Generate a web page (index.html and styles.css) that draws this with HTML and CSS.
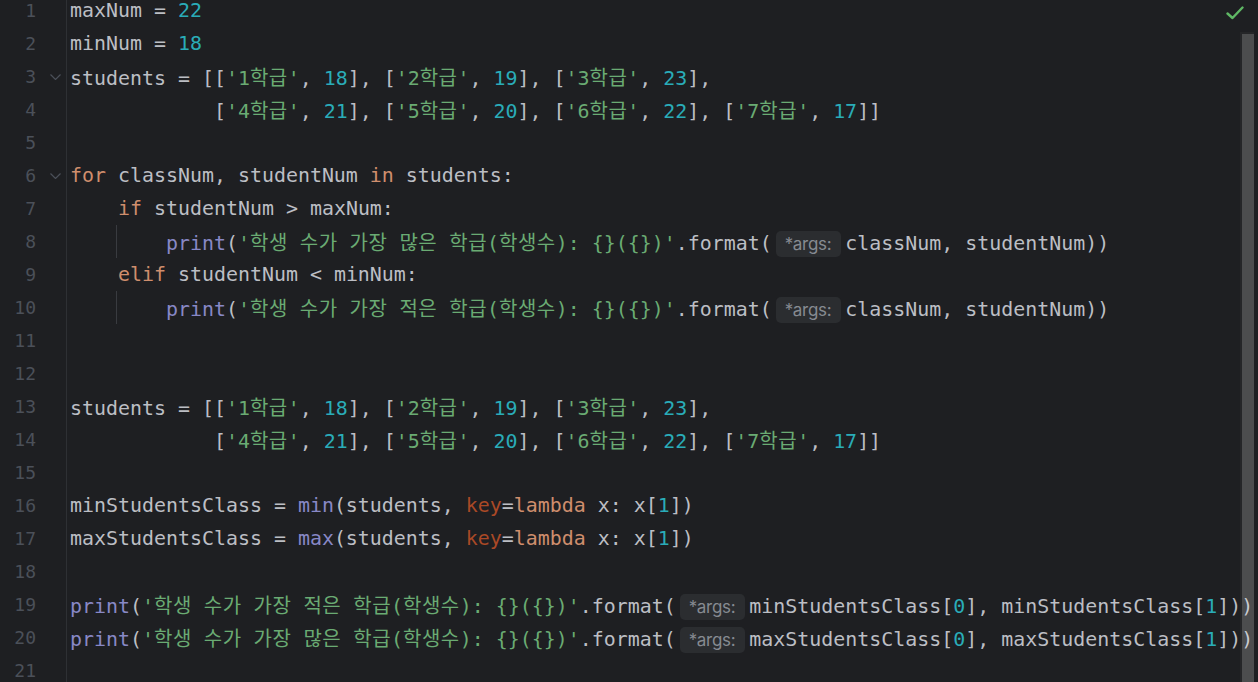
FILE: index.html
```html
<!DOCTYPE html>
<html lang="ko">
<head>
<meta charset="utf-8">
<title>editor</title>
<link rel="stylesheet" href="styles.css">
</head>
<body>
<div class="editor">
  <div class="lines">
    <div class="line"><span class="ln">1</span><span class="fold"></span><span class="code">maxNum = <span class="n">22</span></span></div>
    <div class="line"><span class="ln">2</span><span class="fold"></span><span class="code">minNum = <span class="n">18</span></span></div>
    <div class="line"><span class="ln">3</span><span class="fold"><svg class="chev" width="11" height="6" viewBox="0 0 11 6"><path d="M0.5 0.5 L5.5 5.5 L10.5 0.5"/></svg></span><span class="code">students = [[<span class="s">'1<span class="ko">학급</span>'</span>, <span class="n">18</span>], [<span class="s">'2<span class="ko">학급</span>'</span>, <span class="n">19</span>], [<span class="s">'3<span class="ko">학급</span>'</span>, <span class="n">23</span>],</span></div>
    <div class="line"><span class="ln">4</span><span class="fold"></span><span class="code">            [<span class="s">'4<span class="ko">학급</span>'</span>, <span class="n">21</span>], [<span class="s">'5<span class="ko">학급</span>'</span>, <span class="n">20</span>], [<span class="s">'6<span class="ko">학급</span>'</span>, <span class="n">22</span>], [<span class="s">'7<span class="ko">학급</span>'</span>, <span class="n">17</span>]]</span></div>
    <div class="line"><span class="ln">5</span><span class="fold"></span><span class="code"></span></div>
    <div class="line"><span class="ln">6</span><span class="fold"><svg class="chev" width="11" height="6" viewBox="0 0 11 6"><path d="M0.5 0.5 L5.5 5.5 L10.5 0.5"/></svg></span><span class="code"><span class="kw">for</span> classNum, studentNum <span class="kw">in</span> students:</span></div>
    <div class="line"><span class="ln">7</span><span class="fold"></span><span class="code">    <span class="kw">if</span> studentNum &gt; maxNum:</span></div>
    <div class="line"><span class="ln">8</span><span class="fold"></span><span class="code"><span class="indent"></span><span class="b">print</span>(<span class="s">'<span class="ko">학생</span> <span class="ko">수가</span> <span class="ko">가장</span> <span class="ko">많은</span> <span class="ko">학급</span>(<span class="ko">학생수</span>): {}({})'</span>.format(<span class="hint">*args:</span>classNum, studentNum))</span></div>
    <div class="line"><span class="ln">9</span><span class="fold"></span><span class="code">    <span class="kw">elif</span> studentNum &lt; minNum:</span></div>
    <div class="line"><span class="ln">10</span><span class="fold"></span><span class="code"><span class="indent"></span><span class="b">print</span>(<span class="s">'<span class="ko">학생</span> <span class="ko">수가</span> <span class="ko">가장</span> <span class="ko">적은</span> <span class="ko">학급</span>(<span class="ko">학생수</span>): {}({})'</span>.format(<span class="hint">*args:</span>classNum, studentNum))</span></div>
    <div class="line"><span class="ln">11</span><span class="fold"></span><span class="code"></span></div>
    <div class="line"><span class="ln">12</span><span class="fold"></span><span class="code"></span></div>
    <div class="line"><span class="ln">13</span><span class="fold"></span><span class="code">students = [[<span class="s">'1<span class="ko">학급</span>'</span>, <span class="n">18</span>], [<span class="s">'2<span class="ko">학급</span>'</span>, <span class="n">19</span>], [<span class="s">'3<span class="ko">학급</span>'</span>, <span class="n">23</span>],</span></div>
    <div class="line"><span class="ln">14</span><span class="fold"></span><span class="code">            [<span class="s">'4<span class="ko">학급</span>'</span>, <span class="n">21</span>], [<span class="s">'5<span class="ko">학급</span>'</span>, <span class="n">20</span>], [<span class="s">'6<span class="ko">학급</span>'</span>, <span class="n">22</span>], [<span class="s">'7<span class="ko">학급</span>'</span>, <span class="n">17</span>]]</span></div>
    <div class="line"><span class="ln">15</span><span class="fold"></span><span class="code"></span></div>
    <div class="line"><span class="ln">16</span><span class="fold"></span><span class="code">minStudentsClass = <span class="b">min</span>(students, <span class="p">key</span>=<span class="kw">lambda</span> x: x[<span class="n">1</span>])</span></div>
    <div class="line"><span class="ln">17</span><span class="fold"></span><span class="code">maxStudentsClass = <span class="b">max</span>(students, <span class="p">key</span>=<span class="kw">lambda</span> x: x[<span class="n">1</span>])</span></div>
    <div class="line"><span class="ln">18</span><span class="fold"></span><span class="code"></span></div>
    <div class="line"><span class="ln">19</span><span class="fold"></span><span class="code"><span class="b">print</span>(<span class="s">'<span class="ko">학생</span> <span class="ko">수가</span> <span class="ko">가장</span> <span class="ko">적은</span> <span class="ko">학급</span>(<span class="ko">학생수</span>): {}({})'</span>.format(<span class="hint">*args:</span>minStudentsClass[<span class="n">0</span>], minStudentsClass[<span class="n">1</span>]))</span></div>
    <div class="line"><span class="ln">20</span><span class="fold"></span><span class="code"><span class="b">print</span>(<span class="s">'<span class="ko">학생</span> <span class="ko">수가</span> <span class="ko">가장</span> <span class="ko">많은</span> <span class="ko">학급</span>(<span class="ko">학생수</span>): {}({})'</span>.format(<span class="hint">*args:</span>maxStudentsClass[<span class="n">0</span>], maxStudentsClass[<span class="n">1</span>]))</span></div>
    <div class="line"><span class="ln">21</span><span class="fold"></span><span class="code"></span></div>
  </div>
  <svg class="check" width="18" height="14" viewBox="0 0 18 14"><path d="M1.5 7.5 L6.5 12 L16.5 1.5"/></svg>
  <div class="scrollbar"><div class="thumb"></div></div>
</div>
</body>
</html>
```

FILE: styles.css
```css
html, body {
  margin: 0;
  padding: 0;
  background: #1e1f22;
  overflow: hidden;
  height: 682px;
}

.editor {
  position: relative;
  width: 1258px;
  height: 682px;
  overflow: hidden;
  background: #1e1f22;
}

.lines {
  margin-top: -6px;
  display: flex;
  flex-direction: column;
}

.line {
  display: flex;
  height: 33px;
  line-height: 33px;
  font-family: "DejaVu Sans Mono", "Noto Sans CJK KR", monospace;
  font-size: 19.93px;
  color: #bcbec4;
}

.ln {
  width: 36px;
  flex: none;
  text-align: right;
  font-size: 18px;
  color: #4b5059;
}

.fold {
  flex: none;
  border-right: 1px solid #2e3034;
  display: flex;
  align-items: center;
  padding-left: 14px;
  width: 16px;
}

.chev {
  display: block;
  fill: none;
  stroke: #4b5059;
  stroke-width: 1.2;
}

.code {
  padding-left: 3px;
  white-space: pre;
}

.indent {
  display: inline-block;
  width: 96px;
  height: 33px;
  vertical-align: top;
  background: linear-gradient(to right, transparent 46px, #393b40 46px, #393b40 47px, transparent 47px);
}

.kw { color: #cf8e6d; }
.s { color: #6aab73; }
.n { color: #2aacb8; }
.b { color: #8888c6; }
.p { color: #aa4926; }

.ko {
  font-family: "Noto Sans CJK KR", sans-serif;
  font-size: 20px;
  letter-spacing: 0.5px;
}

.hint {
  display: inline-block;
  height: 26px;
  line-height: 26px;
  margin: 0 4px 0 4px;
  padding: 0 10px 0 9px;
  border-radius: 5px;
  background: #2b2d30;
  color: #868a91;
  font-family: Inter, "Noto Sans", sans-serif;
  font-size: 17px;
  letter-spacing: -0.3px;
  vertical-align: middle;
  position: relative;
  top: -1px;
}

.check {
  position: absolute;
  top: 6px;
  left: 1226px;
  fill: none;
  stroke: #5fb865;
  stroke-width: 2.4;
  stroke-linecap: round;
  stroke-linejoin: round;
}

.scrollbar {
  position: absolute;
  top: 32px;
  left: 1240px;
  width: 14px;
  bottom: 0;
  background: rgba(255, 255, 255, 0.03);
}

.thumb {
  margin: 2px 0 0 2px;
  width: 12px;
  height: 100%;
  background: rgba(255, 255, 255, 0.18);
}
```
